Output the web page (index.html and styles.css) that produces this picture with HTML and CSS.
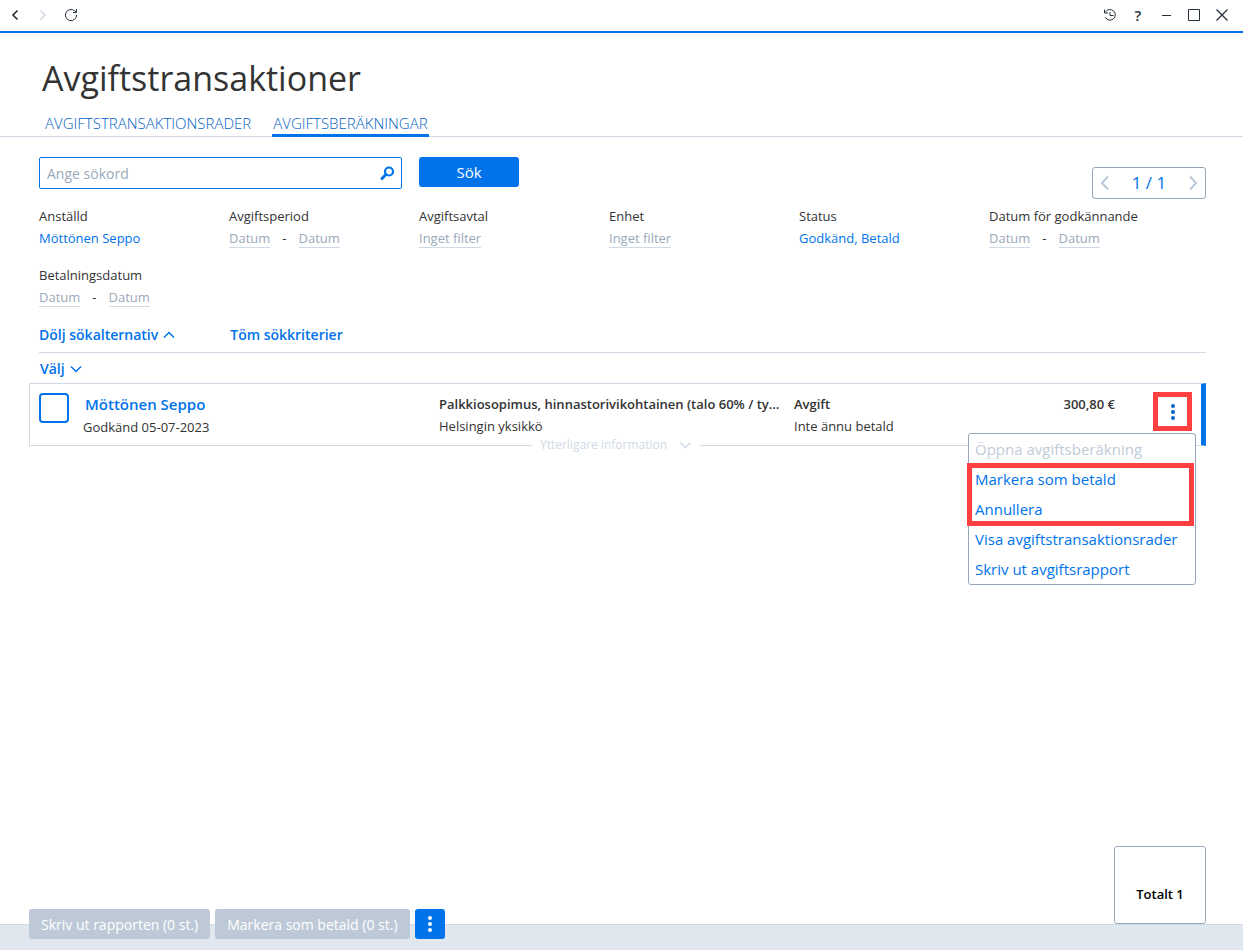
FILE: index.html
```html
<!DOCTYPE html>
<html lang="sv">
<head>
    <meta charset="UTF-8">
    <meta name="viewport" content="width=device-width, initial-scale=1.0">
    <title>Avgiftstransaktioner</title>
    <link rel="stylesheet" href="styles.css">
</head>
<body>
    <!-- Fönsterlist -->
    <div class="window-bar">
        <div class="window-group">
            <button type="button" aria-label="Bakåt"><svg width="14" height="14" viewBox="0 0 14 14"><path d="M9.500 2.500 5 7l4.500 4.500" stroke-width="1.600"/></svg></button>
            <button type="button" aria-label="Framåt" disabled><svg width="14" height="14" viewBox="0 0 14 14"><path d="M4.500 2.500 9 7l-4.500 4.500" stroke-width="1.500"/></svg></button>
            <button type="button" aria-label="Uppdatera"><svg width="14" height="14" viewBox="0 0 14 14"><path d="M12.600 7A5.600 5.600 0 1 1 10.500 2.700L12 4M12.500 1v3.500H9"/></svg></button>
        </div>
        <div class="window-group">
            <button type="button" aria-label="Historik"><svg width="14" height="14" viewBox="0 0 14 14"><path d="M2.500 4A5.300 5.300 0 1 1 2.300 9.300M1.500 1.500v3.500h3.500M7 4v3.500h3.500"/></svg></button>
            <button type="button" aria-label="Hjälp" class="help">?</button>
            <button type="button" aria-label="Minimera"><svg width="14" height="14" viewBox="0 0 14 14"><path d="M3 7.500h9"/></svg></button>
            <button type="button" aria-label="Maximera"><svg width="14" height="14" viewBox="0 0 14 14"><path d="M1.500 1.500h11v11h-11z"/></svg></button>
            <button type="button" aria-label="Stäng"><svg width="14" height="14" viewBox="0 0 14 14"><path d="M1.500 1.500l11 11M12.500 1.500l-11 11" stroke-width="1.300"/></svg></button>
        </div>
    </div>

    <header>
        <h1>Avgiftstransaktioner</h1>
        <nav class="tabs">
            <a href="#rader">AVGIFTSTRANSAKTIONSRADER</a>
            <a href="#berakningar" class="active">AVGIFTSBERÄKNINGAR</a>
        </nav>
    </header>

    <main>
        <!-- Sökning -->
        <div class="search-row">
            <div class="search-field">
                <input type="text" id="search" placeholder="Ange sökord" aria-label="Sökord">
                <svg width="16" height="16" viewBox="0 0 16 16"><circle cx="10" cy="6.500" r="4" stroke-width="2.200"/><path d="M7 9.500 3 13.500" stroke-width="3" stroke-linecap="round"/></svg>
            </div>
            <button type="button" class="search-button">Sök</button>
            <div class="pager">
                <button type="button" aria-label="Föregående sida" disabled><svg width="10" height="16" viewBox="0 0 10 16"><path d="M8 1.500 2 8l6 6.500" stroke-width="2"/></svg></button>
                <span>1 / 1</span>
                <button type="button" aria-label="Nästa sida" disabled><svg width="10" height="16" viewBox="0 0 10 16"><path d="M2 1.500 8 8l-6 6.500" stroke-width="2"/></svg></button>
            </div>
        </div>

        <!-- Filter -->
        <div class="filters">
            <div class="filter">
                <span>Anställd</span>
                <div><a href="#anstalld">Möttönen Seppo</a></div>
            </div>
            <div class="filter">
                <span>Avgiftsperiod</span>
                <div class="range"><a href="#fran" class="empty">Datum</a> <span>-</span> <a href="#till" class="empty">Datum</a></div>
            </div>
            <div class="filter">
                <span>Avgiftsavtal</span>
                <div><a href="#avtal" class="empty">Inget filter</a></div>
            </div>
            <div class="filter">
                <span>Enhet</span>
                <div><a href="#enhet" class="empty">Inget filter</a></div>
            </div>
            <div class="filter">
                <span>Status</span>
                <div><a href="#status">Godkänd, Betald</a></div>
            </div>
            <div class="filter">
                <span>Datum för godkännande</span>
                <div class="range"><a href="#fran" class="empty">Datum</a> <span>-</span> <a href="#till" class="empty">Datum</a></div>
            </div>
            <div class="filter">
                <span>Betalningsdatum</span>
                <div class="range"><a href="#fran" class="empty">Datum</a> <span>-</span> <a href="#till" class="empty">Datum</a></div>
            </div>
        </div>

        <div class="filter-actions">
            <button type="button" class="text-button">Dölj sökalternativ <svg width="12" height="8" viewBox="0 0 12 8"><path d="M1 6.500 6 1.500l5 5" stroke-width="1.500"/></svg></button>
            <button type="button" class="text-button">Töm sökkriterier</button>
        </div>

        <div class="select-row">
            <button type="button" class="text-button">Välj <svg width="12" height="8" viewBox="0 0 12 8"><path d="M1 1.500l5 5 5-5" stroke-width="1.500"/></svg></button>
        </div>

        <!-- Resultat -->
        <article class="result">
            <input type="checkbox" aria-label="Välj Möttönen Seppo">
            <div class="result-person">
                <a href="#mottonen">Möttönen Seppo</a>
                <p>Godkänd 05-07-2023</p>
            </div>
            <div class="result-contract">
                <strong>Palkkiosopimus, hinnastorivikohtainen (talo 60% / ty...</strong>
                <p>Helsingin yksikkö</p>
            </div>
            <div class="result-type">
                <strong>Avgift</strong>
                <p>Inte ännu betald</p>
            </div>
            <strong class="result-sum">300,80 €</strong>
            <div class="result-menu">
                <button type="button" class="kebab" aria-label="Åtgärder"><svg width="6" height="18" viewBox="0 0 6 18"><circle cx="3" cy="3" r="2"/><circle cx="3" cy="9" r="2"/><circle cx="3" cy="15" r="2"/></svg></button>
                <div class="menu">
                    <button type="button" disabled>Öppna avgiftsberäkning</button>
                    <div class="marked">
                        <button type="button">Markera som betald</button>
                        <button type="button">Annullera</button>
                    </div>
                    <button type="button">Visa avgiftstransaktionsrader</button>
                    <button type="button">Skriv ut avgiftsrapport</button>
                </div>
            </div>
            <button type="button" class="more">Ytterligare information <svg width="12" height="8" viewBox="0 0 12 8"><path d="M1 1.500l5 5 5-5" stroke-width="1.500"/></svg></button>
        </article>

        <div class="total">Totalt 1</div>
    </main>

    <footer>
        <button type="button" disabled>Skriv ut rapporten (0 st.)</button>
        <button type="button" disabled>Markera som betald (0 st.)</button>
        <button type="button" class="footer-more" aria-label="Fler åtgärder"><svg width="6" height="18" viewBox="0 0 6 18"><circle cx="3" cy="3" r="2"/><circle cx="3" cy="9" r="2"/><circle cx="3" cy="15" r="2"/></svg></button>
    </footer>
</body>
</html>
```
FILE: styles.css
```css
* {
    box-sizing: border-box;
}

body {
    display: flex;
    flex-direction: column;
    min-height: 100vh;
    margin: 0;
    font-family: 'Open Sans', 'Noto Sans', sans-serif;
    font-size: 13px;
    line-height: 22px;
    color: #333;
    background-color: #fff;
}

button {
    padding: 0;
    border: none;
    background: none;
    font: inherit;
    color: inherit;
    cursor: pointer;
}

button:disabled {
    cursor: default;
}

a {
    color: #0073eb;
    text-decoration: none;
}

p {
    margin: 0;
}

svg {
    display: block;
    fill: none;
    stroke: currentColor;
}

strong {
    font-weight: 600;
}

/* Fönsterlist */
.window-bar {
    display: flex;
    justify-content: space-between;
    height: 33px;
    padding: 0 14px 2px 8px;
    border-bottom: 2px solid #0073eb;
    color: #25303b;
}

.window-group {
    display: flex;
    align-items: center;
    gap: 14px;
}

.window-group button:disabled {
    color: #d0dae6;
}

.help {
    width: 14px;
    font-size: 15px;
    font-weight: 600;
}

/* Rubrik och flikar */
header {
    border-bottom: 1px solid #d0dae6;
}

h1 {
    margin: 21px 42px 0;
    font-size: 34px;
    font-weight: 400;
    line-height: 48px;
}

.tabs {
    display: flex;
    gap: 20px;
    margin-bottom: -1px;
    padding: 10px 44px 0;
}

.tabs a {
    padding: 0 1px;
    border-bottom: 3px solid transparent;
    font-size: 15px;
    font-weight: 300;
    line-height: 22px;
    color: #0062c4;
}

.tabs a.active {
    border-color: #0073eb;
}

main {
    display: flex;
    flex: 1;
    flex-direction: column;
    padding: 20px 37px 0 39px;
}

/* Sökning */
.search-row {
    display: flex;
    align-items: flex-start;
}

.search-field {
    display: flex;
    align-items: center;
    width: 363px;
    height: 32px;
    padding: 0 6px 0 7px;
    border: 1px solid #0073eb;
    border-radius: 2px;
    color: #0073eb;
}

.search-field input {
    flex: 1;
    min-width: 0;
    padding: 1px 0 0;
    border: none;
    outline: none;
    font: inherit;
    font-size: 14px;
    color: #333;
}

.search-field input::placeholder {
    color: #9aa9b9;
}

.search-button {
    width: 100px;
    height: 30px;
    margin-left: 17px;
    border-radius: 3px;
    background-color: #0073eb;
    font-size: 15px;
    color: #fff;
}

.pager {
    display: flex;
    align-items: center;
    justify-content: space-between;
    width: 114px;
    height: 32px;
    margin: 10px 0 0 auto;
    padding: 0 7px;
    border: 1px solid #97a7b7;
    border-radius: 3px;
    font-size: 17px;
    color: #0073eb;
}

.pager button {
    color: #b9c7d6;
}

/* Filter */
.filters {
    display: grid;
    grid-template-columns: repeat(auto-fill, 190px);
    row-gap: 15px;
    margin-top: 6px;
}

.filter {
    height: 44px;
}

.range {
    display: flex;
    align-items: baseline;
    gap: 12px;
}

.filter .empty {
    display: inline-block;
    border-bottom: 1px solid #d0dae6;
    line-height: 18px;
    color: #9aa9b9;
}

.filter-actions {
    display: flex;
    gap: 55px;
    padding: 16px 0 6px;
    border-bottom: 1px solid #d0dae6;
}

.text-button {
    display: flex;
    align-items: center;
    gap: 5px;
    font-size: 14px;
    font-weight: 600;
    color: #0073eb;
}

.select-row {
    padding: 5px 1px 3px;
}

/* Resultat */
.result {
    position: relative;
    display: flex;
    align-items: flex-start;
    height: 63px;
    margin-left: -10px;
    padding: 9px 9px 0;
    border: 1px solid #d0dae6;
    border-right: 5px solid #0073eb;
}

.result input {
    appearance: none;
    flex: none;
    width: 30px;
    height: 30px;
    margin: 0 14px 0 0;
    border: 2px solid #0073eb;
    border-radius: 4px;
}

.result-person {
    flex: 1;
}

.result-person a {
    display: block;
    padding: 0 2px;
    font-size: 15px;
    font-weight: 600;
    line-height: 23px;
}

.result-contract {
    width: 345px;
    margin-right: 10px;
}

.result-contract strong {
    display: block;
    white-space: nowrap;
}

.result-type {
    width: 200px;
}

.result-type strong {
    display: block;
}

.result-sum {
    width: 121px;
    margin-right: 38px;
    text-align: right;
}

.result-menu {
    position: relative;
}

.kebab {
    display: flex;
    align-items: center;
    justify-content: center;
    width: 39px;
    height: 39px;
    margin-top: -1px;
    border: 5px solid #ff4040;
    color: #0062c4;
}

.kebab svg,
.footer-more svg {
    fill: currentColor;
    stroke: none;
}

.menu {
    position: absolute;
    top: 40px;
    right: -4px;
    z-index: 1;
    width: 228px;
    border: 1px solid #97a7b7;
    border-radius: 3px;
    background-color: #fff;
}

.menu button {
    display: block;
    width: 100%;
    padding: 0 6px;
    font-size: 15px;
    line-height: 30px;
    text-align: left;
    white-space: nowrap;
    color: #0073eb;
}

.menu button:disabled {
    color: #bfcbd9;
}

.marked {
    position: relative;
}

.marked::after {
    content: '';
    position: absolute;
    inset: -1px 1px -2px -2px;
    border: 5px solid #ff4040;
    pointer-events: none;
}

.more {
    position: absolute;
    bottom: -11px;
    left: 50%;
    display: flex;
    align-items: center;
    gap: 12px;
    padding: 0 9px;
    background-color: #fff;
    font-size: 12px;
    white-space: nowrap;
    color: #d0dae6;
    transform: translateX(-50%);
}

.total {
    width: 92px;
    height: 78px;
    margin: auto 0 0 auto;
    padding-top: 36px;
    border: 1px solid #97a7b7;
    border-radius: 3px;
    font-weight: 600;
    text-align: center;
    color: #000;
}

/* Sidfot */
footer {
    display: flex;
    gap: 5px;
    height: 26px;
    padding: 0 29px;
    border-top: 1px solid #d0dae6;
    background-color: #e0e7ee;
}

footer button {
    height: 30px;
    margin-top: -16px;
    padding: 1px 12px 0;
    border-radius: 3px;
    background-color: #bdc9d7;
    font-size: 14px;
    color: #fff;
}

.footer-more {
    padding: 0 12px;
    background-color: #0073eb;
}
```
